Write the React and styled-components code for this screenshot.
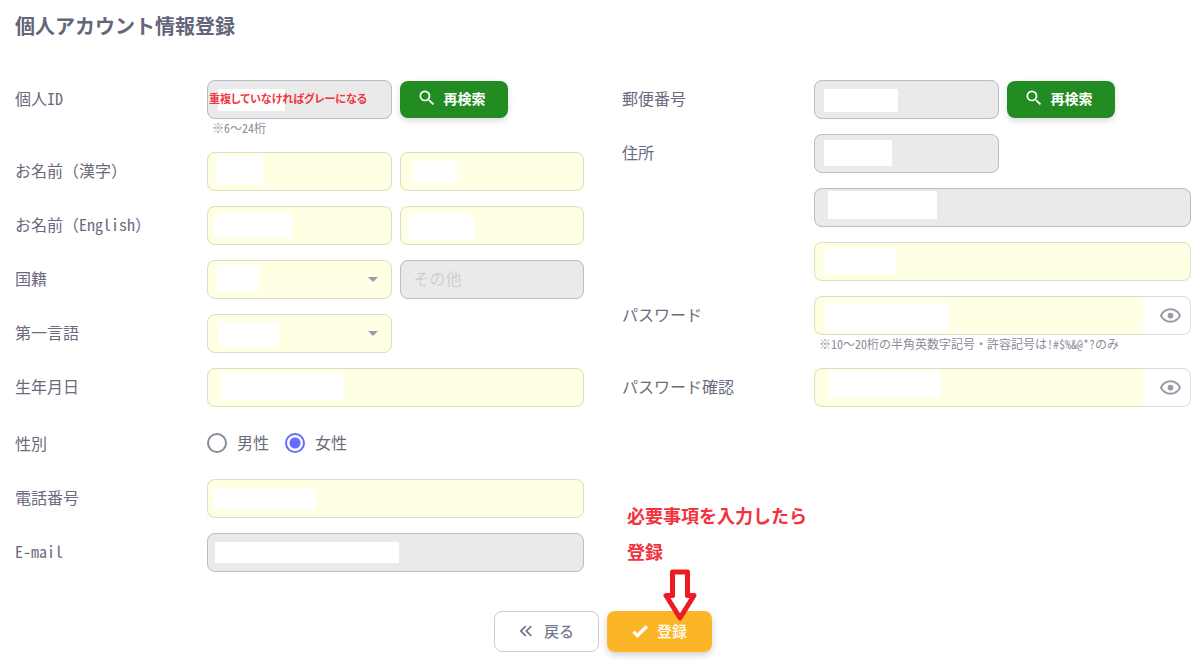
import React, { useState } from "react";
import styled, { createGlobalStyle, css } from "styled-components";

const color = {
  text: "#6a6b7c",
  title: "#64657a",
  helper: "#8b8c9a",
  outline: "rgba(76, 78, 100, 0.2)",
  outlineLocked: "#bcbcc6",
  editable: "#ffffe3",
  locked: "#eaeaea",
  icon: "#9c9ba8",
  primary: "#666cff",
  search: "#228b22",
  submit: "#fdb528",
  note: "#f2323c",
};

const GlobalStyle = createGlobalStyle`
  *, *::before, *::after { box-sizing: border-box; }
  body {
    margin: 0;
    background: #fff;
    color: ${color.text};
    font-family: "Noto Sans CJK JP", "Noto Sans", sans-serif;
    font-size: 16px;
  }
  button, input, select { font: inherit; color: inherit; }
`;

const Page = styled.form`
  padding: 11px 9px 14px 15px;
`;

const Title = styled.h1`
  margin: 0 0 39px;
  color: ${color.title};
  font-size: 20px;
  line-height: 30px;
  font-weight: 700;
`;

const Columns = styled.div`
  display: grid;
  grid-template-columns: 1fr 1fr;
  gap: 38px;
`;

const Column = styled.div`
  display: flex;
  flex-direction: column;
  gap: 15px;
  min-width: 0;
`;

const Row = styled.div`
  display: grid;
  grid-template-columns: 192px minmax(0, 1fr);
`;

const labelStyle = css`
  line-height: ${(p) => (p.$tall ? 42 : 37)}px;
  white-space: nowrap;
`;
const Label = styled.label`${labelStyle}`;
const GroupLabel = styled.span`${labelStyle}`;

/* Latin letters and digits in half-width cells. */
const Half = styled.span`
  font-feature-settings: "hwid";
`;

const Fields = styled.div`
  display: grid;
  grid-template-columns: ${(p) => (p.$half ? "1fr 1fr" : "1fr")};
  align-items: center;
  column-gap: 8px;
`;

const Helper = styled.small`
  grid-column: 1 / -1;
  padding-left: 5px;
  color: ${color.helper};
  font-size: 12px;
  line-height: 18px;
  white-space: nowrap;
`;

const Box = styled.div`
  position: relative;
  display: flex;
  height: 39px;
  min-width: 0;
  border-radius: ${(p) => (p.$locked || p.$round ? 8 : 0)}px;
  background: ${(p) => (p.$locked ? color.locked : p.$plain ? "#fff" : color.editable)};
  &::after {
    content: "";
    position: absolute;
    inset: 0;
    border: 1px solid ${(p) => (p.$locked ? color.outlineLocked : color.outline)};
    border-radius: 8px;
    pointer-events: none;
  }
`;

const fieldStyle = css`
  flex: 1;
  min-width: 0;
  padding: 0 14px 3px;
  border: 0;
  outline: 0;
  background: transparent;
`;

const Input = styled.input`
  ${fieldStyle}
  background: ${(p) => (p.$filled ? color.editable : "transparent")};
  &::placeholder { color: #cecfd3; opacity: 1; }
`;

const Select = styled.select`
  ${fieldStyle}
  appearance: none;
`;

const SelectArrow = styled.svg`
  position: absolute;
  right: 7px;
  top: 7px;
  width: 24px;
  height: 24px;
  fill: ${color.icon};
  pointer-events: none;
`;

/* White block that hides the personal value of a field. */
const Mask = styled.span`
  position: absolute;
  left: ${(p) => p.$at[0]}px;
  top: ${(p) => p.$at[1]}px;
  width: ${(p) => p.$at[2]}px;
  height: ${(p) => p.$at[3]}px;
  background: #fff;
  pointer-events: none;
`;

const InlineNote = styled.strong`
  position: absolute;
  left: 2px;
  top: 9px;
  color: ${color.note};
  font-size: 11px;
  line-height: 18px;
  font-feature-settings: "palt";
  white-space: nowrap;
  pointer-events: none;
`;

const EyeButton = styled.button`
  display: flex;
  align-items: center;
  justify-content: center;
  width: 48px;
  padding: 0 0 0 6px;
  border: 0;
  border-radius: 0 8px 8px 0;
  background: #fff;
  svg { width: 23px; height: 23px; fill: ${color.icon}; }
`;

const Radios = styled.div`
  display: flex;
  align-items: center;
  gap: 16px;
`;

const RadioLabel = styled.label`
  display: flex;
  align-items: center;
  gap: 10px;
`;

const RadioText = styled.span`
  padding-bottom: 2px;
`;

const Radio = styled.input`
  appearance: none;
  width: 20px;
  height: 20px;
  margin: 0;
  border: 2px solid #8a8998;
  border-radius: 50%;
  &:checked {
    border-color: ${color.primary};
    background: radial-gradient(circle, ${color.primary} 5px, #fff 6px);
  }
`;

const Button = styled.button`
  display: inline-flex;
  align-items: center;
  justify-self: start;
  border: 0;
  border-radius: 8px;
  color: #fff;
  white-space: nowrap;
  svg { width: 20px; height: 20px; fill: currentColor; }
`;

const SearchButton = styled(Button)`
  gap: 7px;
  height: 37px;
  padding: 0 22px 3px 17px;
  background: ${color.search};
  box-shadow: 0 3px 6px rgba(76, 78, 100, 0.2);
  font-size: 14px;
  font-weight: 700;
`;

const FooterButton = styled(Button)`
  gap: 7px;
  height: 41px;
  padding: 0 25px 2px 23px;
  font-size: 15px;
  font-weight: 500;
`;

const BackButton = styled(FooterButton)`
  padding: 0 24px 2px 20px;
  border: 1px solid #cbcbd5;
  background: #fff;
  color: #777b92;
  svg { width: 22px; height: 22px; }
`;

const SubmitButton = styled(FooterButton)`
  background: ${color.submit};
  box-shadow: 0 3px 6px rgba(76, 78, 100, 0.25);
`;

const Footer = styled.div`
  display: flex;
  justify-content: center;
  gap: 8px;
  margin-top: 39px;
`;

const SubmitWrap = styled.div`
  position: relative;
`;

const Arrow = styled.svg`
  position: absolute;
  left: 55px;
  top: -42px;
  width: 36px;
  height: 54px;
  pointer-events: none;
`;

const Note = styled.strong`
  margin-top: 75px;
  padding-left: 5px;
  color: ${color.note};
  font-size: 18px;
  line-height: 36px;
`;

function TextField({ id, label, mask, locked, placeholder, children }) {
  return (
    <Box $locked={locked}>
      <Input id={id} type="text" aria-label={label} readOnly={locked} placeholder={placeholder} />
      {mask && <Mask $at={mask} />}
      {children}
    </Box>
  );
}

function SelectField({ id, mask }) {
  return (
    <Box $round>
      <Select id={id}><option value="" /></Select>
      <Mask $at={mask} />
      <SelectArrow viewBox="0 0 24 24"><path d="M7 10l5 5 5-5z" /></SelectArrow>
    </Box>
  );
}

function PasswordField({ id, mask }) {
  const [shown, setShown] = useState(false);
  return (
    <Box $plain $round>
      <Input id={id} type={shown ? "text" : "password"} $filled />
      <Mask $at={mask} />
      <EyeButton type="button" aria-label="パスワードを表示" onClick={() => setShown(!shown)}>
        <svg viewBox="0 0 24 24">
          <path d="M12,9A3,3 0 0,1 15,12A3,3 0 0,1 12,15A3,3 0 0,1 9,12A3,3 0 0,1 12,9M12,4.5C17,4.5 21.27,7.61 23,12C21.27,16.39 17,19.5 12,19.5C7,19.5 2.73,16.39 1,12C2.73,7.61 7,4.5 12,4.5M3.18,12C4.83,15.36 8.24,17.5 12,17.5C15.76,17.5 19.17,15.36 20.82,12C19.17,8.64 15.76,6.5 12,6.5C8.24,6.5 4.83,8.64 3.18,12Z" />
        </svg>
      </EyeButton>
    </Box>
  );
}

function Search() {
  return (
    <SearchButton type="button">
      <svg viewBox="0 0 24 24">
        <path d="M15.5 14h-.79l-.28-.27A6.47 6.47 0 0 0 16 9.5 6.5 6.5 0 1 0 9.5 16c1.61 0 3.09-.59 4.23-1.57l.27.28v.79l5 4.99L20.49 19l-4.99-5zm-6 0C7.01 14 5 11.99 5 9.5S7.01 5 9.5 5 14 7.01 14 9.5 11.99 14 9.5 14z" />
      </svg>
      再検索
    </SearchButton>
  );
}

export default function App() {
  const [gender, setGender] = useState("female");
  return (
    <>
      <GlobalStyle />
      <Page onSubmit={(e) => e.preventDefault()}>
        <Title>個人アカウント情報登録</Title>
        <Columns>
          <Column>
            <Row>
              <Label htmlFor="user-id">個人<Half>ID</Half></Label>
              <Fields $half>
                <TextField id="user-id" locked mask={[11, 9, 67, 22]}>
                  <InlineNote>重複していなければグレーになる</InlineNote>
                </TextField>
                <Search />
                <Helper>※<Half>6</Half>～<Half>24</Half>桁</Helper>
              </Fields>
            </Row>
            <Row>
              <Label htmlFor="last-kanji">お名前（漢字）</Label>
              <Fields $half>
                <TextField id="last-kanji" mask={[9, 4, 47, 28]} />
                <TextField label="名（漢字）" mask={[13, 9, 44, 22]} />
              </Fields>
            </Row>
            <Row>
              <Label htmlFor="last-en">お名前（<Half>English</Half>）</Label>
              <Fields $half>
                <TextField id="last-en" mask={[7, 8, 79, 24]} />
                <TextField label="名（English）" mask={[9, 8, 65, 26]} />
              </Fields>
            </Row>
            <Row>
              <Label htmlFor="nationality">国籍</Label>
              <Fields $half>
                <SelectField id="nationality" mask={[10, 5, 42, 26]} />
                <TextField label="その他の国籍" locked placeholder="その他" />
              </Fields>
            </Row>
            <Row>
              <Label htmlFor="language">第一言語</Label>
              <Fields $half>
                <SelectField id="language" mask={[11, 8, 61, 24]} />
              </Fields>
            </Row>
            <Row>
              <Label htmlFor="birthday">生年月日</Label>
              <Fields>
                <TextField id="birthday" mask={[14, 5, 123, 27]} />
              </Fields>
            </Row>
            <Row role="radiogroup" aria-labelledby="gender-label">
              <GroupLabel id="gender-label" $tall>性別</GroupLabel>
              <Radios>
                <RadioLabel>
                  <Radio type="radio" name="gender" checked={gender === "male"} onChange={() => setGender("male")} />
                  <RadioText>男性</RadioText>
                </RadioLabel>
                <RadioLabel>
                  <Radio type="radio" name="gender" checked={gender === "female"} onChange={() => setGender("female")} />
                  <RadioText>女性</RadioText>
                </RadioLabel>
              </Radios>
            </Row>
            <Row>
              <Label htmlFor="phone">電話番号</Label>
              <Fields>
                <TextField id="phone" mask={[7, 10, 102, 20]} />
              </Fields>
            </Row>
            <Row>
              <Label htmlFor="email"><Half>E-mail</Half></Label>
              <Fields>
                <TextField id="email" locked mask={[8, 9, 184, 21]} />
              </Fields>
            </Row>
          </Column>

          <Column>
            <Row>
              <Label htmlFor="postal">郵便番号</Label>
              <Fields $half>
                <TextField id="postal" locked mask={[10, 9, 74, 23]} />
                <Search />
              </Fields>
            </Row>
            <Row>
              <Label htmlFor="prefecture">住所</Label>
              <Fields $half>
                <TextField id="prefecture" locked mask={[10, 6, 68, 26]} />
              </Fields>
            </Row>
            <Row>
              <span />
              <Fields>
                <TextField label="市区町村" locked mask={[14, 3, 109, 28]} />
              </Fields>
            </Row>
            <Row>
              <span />
              <Fields>
                <TextField label="番地・建物名" mask={[10, 6, 72, 26]} />
              </Fields>
            </Row>
            <Row>
              <Label htmlFor="password">パスワード</Label>
              <Fields>
                <PasswordField id="password" mask={[11, 7, 124, 28]} />
                <Helper>
                  ※<Half>10</Half>～<Half>20</Half>桁の半角英数字記号・許容記号は<Half>!#$%&amp;@*?</Half>のみ
                </Helper>
              </Fields>
            </Row>
            <Row>
              <Label htmlFor="password-confirm">パスワード確認</Label>
              <Fields>
                <PasswordField id="password-confirm" mask={[15, 2, 112, 28]} />
              </Fields>
            </Row>
            <Note>
              必要事項を入力したら
              <br />
              登録
            </Note>
          </Column>
        </Columns>

        <Footer>
          <BackButton type="button">
            <svg viewBox="0 0 24 24">
              <path d="M18.41,7.41L17,6L11,12L17,18L18.41,16.59L13.83,12L18.41,7.41M12.41,7.41L11,6L5,12L11,18L12.41,16.59L7.83,12L12.41,7.41Z" />
            </svg>
            戻る
          </BackButton>
          <SubmitWrap>
            <SubmitButton type="submit">
              <svg viewBox="0 0 24 24">
                <path d="M9,20.42L2.79,14.21L5.62,11.38L9,14.77L18.88,4.88L21.71,7.71L9,20.42Z" />
              </svg>
              登録
            </SubmitButton>
            <Arrow viewBox="0 0 36 54">
              <path
                d="M10.5 3H25.5V26.5H32L18 49L4 26.5H10.5Z"
                fill="#fff"
                stroke="#ed1c24"
                strokeWidth="5"
                strokeLinejoin="round"
              />
            </Arrow>
          </SubmitWrap>
        </Footer>
      </Page>
    </>
  );
}
